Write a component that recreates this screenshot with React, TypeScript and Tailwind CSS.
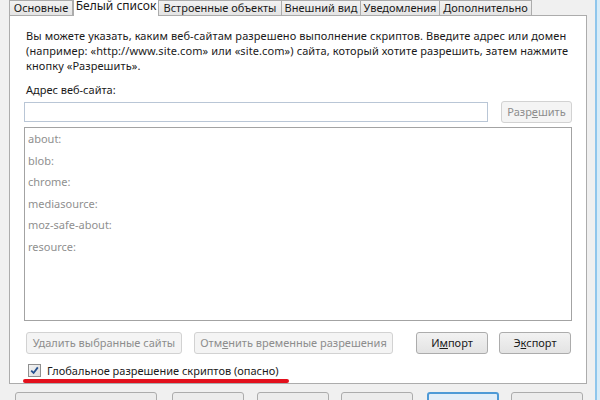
import React from 'react';

const tabs = [
  { label: 'Основные', w: 'w-[64px]' },
  { label: 'Белый список', w: 'w-[86px]', active: true },
  { label: 'Встроенные объекты', w: 'w-[124px]' },
  { label: 'Внешний вид', w: 'w-[80px]' },
  { label: 'Уведомления', w: 'w-[80px]' },
  { label: 'Дополнительно', w: 'w-[93px]' },
];

const sites = ['about:', 'blob:', 'chrome:', 'mediasource:', 'moz-safe-about:', 'resource:'];

const Btn: React.FC<{ className?: string; disabled?: boolean; children: React.ReactNode }> = ({
  className = '',
  disabled,
  children,
}) => (
  <button
    className={
      'h-[22px] whitespace-nowrap rounded-[3px] border text-center leading-[20px] ' +
      (disabled
        ? 'border-[#d2d2d2] bg-[#f4f4f4] text-[#8d8d8d] '
        : 'border-[#acacac] bg-gradient-to-b from-[#f2f2f2] to-[#e3e3e3] text-[#1a1a1a] ') +
      className
    }
  >
    {children}
  </button>
);

const App: React.FC = () => {
  return (
    <div className="flex h-[400px] w-[600px] overflow-hidden bg-[#f0f0f0] font-['Noto_Sans','Open_Sans',sans-serif] text-[11px] text-[#1a1a1a]">
      <div className="flex w-[595px] flex-col pl-[9px] pr-[8px]">
        {/* tabs */}
        <div className="flex h-[15px] items-end">
          {tabs.map((t) =>
            t.active ? (
              <div
                key={t.label}
                className={`${t.w} relative z-10 -mb-px h-[17px] whitespace-nowrap border border-b-0 border-[#acacac] bg-white text-center text-[12px] leading-[12px]`}
              >
                {t.label}
              </div>
            ) : (
              <div
                key={t.label}
                className={`${t.w} -ml-px h-[15px] whitespace-nowrap border border-b-0 border-[#acacac] bg-gradient-to-b from-[#f2f2f2] to-[#e4e4e4] text-center leading-[14px] first:ml-0`}
              >
                {t.label}
              </div>
            )
          )}
        </div>

        {/* panel */}
        <div className="flex h-[374px] flex-col border border-[#acacac] bg-white px-[14px] pt-[12px]">
          <p className="pl-[2px] leading-[15px] tracking-[0.1px]">
            Вы можете указать, каким веб-сайтам разрешено выполнение скриптов. Введите адрес или домен
            (например: «http://www.site.com» или «site.com») сайта, который хотите разрешить, затем нажмите
            кнопку «Разрешить».
          </p>
          <div className="mt-[9px] pl-[2px] leading-[15px]">Адрес веб-сайта:</div>

          <div className="mt-[4px] flex items-center">
            <div className="h-[20px] w-[464px] border border-[#b9c6d6] bg-white" />
            <Btn disabled className="ml-[13px] w-[71px]">
              Разр<u>е</u>шить
            </Btn>
          </div>

          <div className="mt-[4px] flex h-[194px] w-[548px] flex-col border border-[#a3a3a3] pl-[3px] text-[#8f8f8f]">
            {sites.map((s) => (
              <div key={s} className="h-[21.6px] leading-[21.6px]">
                {s}
              </div>
            ))}
          </div>

          <div className="mt-[11px] flex items-center">
            <Btn disabled className="ml-[2px] w-[156px]">
              Удалить выбранные сайты
            </Btn>
            <Btn disabled className="ml-[12px] w-[199px]">
              Отм<u>е</u>нить временные разрешения
            </Btn>
            <Btn className="ml-[23px] w-[72px]">
              И<u>м</u>порт
            </Btn>
            <Btn className="ml-[11px] w-[72px]">
              Э<u>к</u>спорт
            </Btn>
          </div>

          <div className="mt-[9px] pl-[4px]">
            <div className="flex items-center">
              <span className="flex h-[13px] w-[13px] items-center justify-center border border-[#8f8f8f] bg-gradient-to-br from-[#f4f4f4] to-[#dcdcdc]">
                <svg width="9" height="9" viewBox="0 0 9 9">
                  <path d="M1.2 4.6 L3.6 7 L7.8 1.4" fill="none" stroke="#24508f" strokeWidth="1.8" />
                </svg>
              </span>
              <span className="ml-[6px] whitespace-nowrap leading-[15px]">
                Глобальное разрешение скриптов (опасно)
              </span>
            </div>
            <div className="-ml-[5px] mt-[1px] h-[4px] w-[266px] rounded-full bg-[#e3101c]" />
          </div>
        </div>

        {/* bottom dialog buttons */}
        <div className="mt-[8px] flex">
          <div className="ml-[6px] h-[22px] w-[142px] rounded-[3px] border border-[#acacac] bg-[#ececec]" />
          <div className="ml-[15px] h-[22px] w-[72px] rounded-[3px] border border-[#acacac] bg-[#ececec]" />
          <div className="ml-[13px] h-[22px] w-[72px] rounded-[3px] border border-[#acacac] bg-[#ececec]" />
          <div className="ml-[12px] h-[22px] w-[72px] rounded-[3px] border border-[#acacac] bg-[#ececec]" />
          <div className="ml-[14px] h-[22px] w-[72px] rounded-[3px] border-2 border-[#4f9ad6] bg-[#e3eef8]" />
          <div className="ml-[12px] h-[22px] w-[72px] rounded-[3px] border border-[#acacac] bg-[#ececec]" />
        </div>
      </div>
      <div className="w-[5px] border-l-2 border-[#8fc6ec] bg-[#d8ecf8]" />
    </div>
  );
};

export default App;
